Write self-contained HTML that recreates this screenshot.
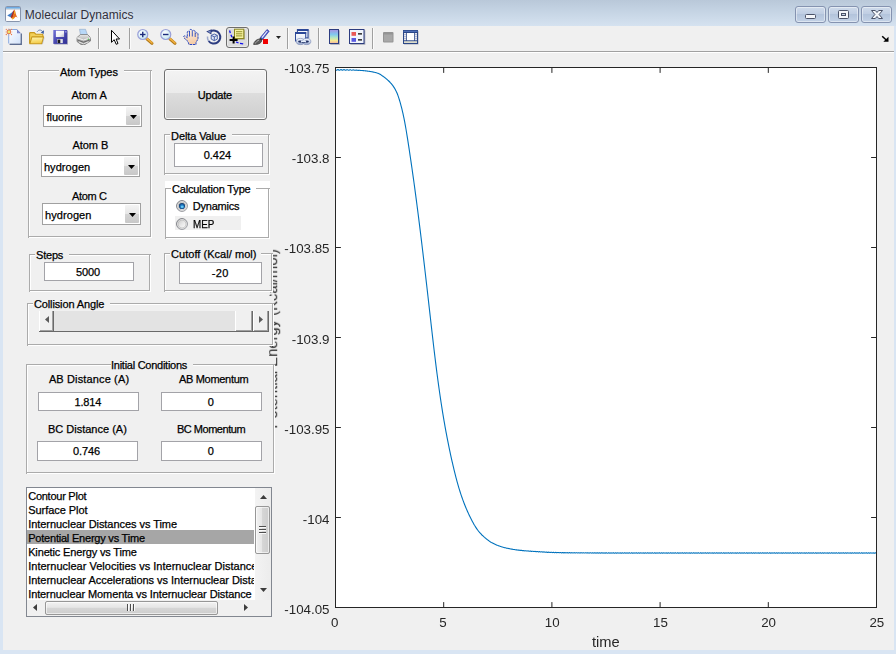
<!DOCTYPE html>
<html><head><meta charset="utf-8"><title>Molecular Dynamics</title>
<style>
*{box-sizing:content-box}
html,body{margin:0;padding:0;background:#d9e5f3;}
body{width:896px;height:654px;overflow:hidden;font-family:"Liberation Sans", Arial, sans-serif;}
#win{position:absolute;left:0;top:0;width:896px;height:654px;overflow:hidden;background:#d9e5f3;}
#titlebar{position:absolute;left:0;top:0;width:896px;height:26px;background:linear-gradient(#b9c8d9 0%,#c4d3e3 40%,#d5e2f0 100%);}
#client{position:absolute;left:3px;top:26px;width:891px;height:624px;background:#f0f0f0;}
#tbline{position:absolute;left:3px;top:51px;width:891px;height:1px;background:#a0a0a0;box-shadow:0 1px 0 #ffffff}
.t{position:absolute;white-space:nowrap;font-family:"Liberation Sans", Arial, sans-serif;-webkit-text-stroke:0.25px currentColor}
.capb{position:absolute;width:29px;height:15px;border:1px solid #8593b0;border-radius:3px;background:linear-gradient(#cfdbeb 0%,#c0cee3 45%,#b3c4dc 50%,#c3d2e6 100%);box-shadow:inset 0 0 0 1px rgba(255,255,255,0.45)}
.pn{position:absolute}
.ln{position:absolute;display:block}
.ed{position:absolute;border:1px solid #a3a3a8;background:#fff}
.cb{position:absolute;border:1px solid #a0a0a0;background:#fff}
.cbb{position:absolute;right:1px;top:1px;bottom:1px;width:14px;background:linear-gradient(#f4f4f4 0%,#e6e6e6 50%,#d4d4d4 51%,#c8c8c8 100%);border-radius:1px}
.cba{position:absolute;right:4px;top:9px}
#upd{position:absolute;left:164px;top:69px;width:101px;height:49px;border:1px solid #707070;border-radius:3px;background:linear-gradient(#f3f3f3 0%,#ebebeb 46%,#dddddd 47%,#cfcfcf 100%);box-shadow:inset 0 0 0 1px #fbfbfb}
#lb{position:absolute;left:26px;top:487px;width:244px;height:128px;border:1px solid #828790;background:#fff}
#lbv{position:absolute;left:27px;top:488px;width:227px;height:112px;overflow:hidden;font-size:11px;line-height:14px;white-space:nowrap;color:#000}
#lbclip{position:absolute;left:27px;top:488px;width:227px;height:112px;overflow:hidden;background:#fff}
.thv{position:absolute;border:1px solid #979797;border-radius:2px;background:linear-gradient(90deg,#f2f2f2 0%,#e6e6e6 45%,#d6d6d6 50%,#cdcdcd 100%);box-shadow:inset 0 0 0 1px rgba(255,255,255,0.6)}
.thh{position:absolute;border:1px solid #979797;border-radius:2px;background:linear-gradient(#f2f2f2 0%,#e6e6e6 45%,#d6d6d6 50%,#cdcdcd 100%);box-shadow:inset 0 0 0 1px rgba(255,255,255,0.6)}
.tk{font-family:"Liberation Sans", Arial, sans-serif;font-size:13.33px;fill:#262626}
.lb{font-family:"Liberation Sans", Arial, sans-serif;font-size:14.67px;fill:#262626}
</style></head>
<body>
<div id="win">
<div id="titlebar"></div>
<svg style="position:absolute;left:5px;top:6px" width="17" height="16" viewBox="0 0 17 16">
<defs><linearGradient id="gtb" x1="0" y1="0" x2="0" y2="1"><stop offset="0" stop-color="#5c9cdc"/><stop offset="1" stop-color="#a4d0f2"/></linearGradient></defs>
<rect x="0.500" y="0.500" width="15" height="15" rx="1.200" fill="#fdfdfd" stroke="#8795ad"/>
<rect x="1" y="1" width="14" height="1.900" fill="url(#gtb)"/>
<path d="M1 3.200 L15 3.200" stroke="#8795ad" stroke-width="0.500"/>
<path d="M2.200 9.400 L6.200 7 L8.200 5.200 L7.300 9.200 L5.600 11.200 Z" fill="#3d7cc8"/>
<path d="M5.600 11.200 L8 5.400 L9.300 3.600 L9 8 L7.400 13 Z" fill="#a82c20"/>
<path d="M9.300 3.600 C9.900 3.600 10.400 6 11 8.500 C11.600 10.500 12.400 11.600 12.900 11.800 L11.500 10.900 C10.500 10.100 9.800 11.500 9 12.400 C8 13.400 7.500 13.300 6.900 12.900 L8.600 8 Z" fill="#e8701c"/>
<path d="M9.300 4.200 L9.900 7.600 L9 7.800 Z" fill="#f8d424"/>
<path d="M6.900 12.900 L8.100 11 L8.800 12.500 C8 13.300 7.500 13.300 6.900 12.900 Z" fill="#f8bc20"/>
<path d="M10.600 7.200 C11.200 9.500 12 11.200 12.900 11.800 L11.600 10.600 Z" fill="#c83828"/>
</svg>
<div class="t" style="left:24.8px;top:7px;font-size:12px;line-height:16px;color:#30303c;letter-spacing:0.04px;-webkit-text-stroke:0;text-shadow:0 0 4px rgba(255,255,255,0.7)">Molecular Dynamics</div>
<div class="capb" style="left:795px;top:6px"></div>
<div class="capb" style="left:828px;top:6px"></div>
<div class="capb" style="left:861px;top:6px"></div>
<svg style="position:absolute;left:795px;top:6px" width="98" height="17" viewBox="0 0 98 17">
<rect x="10.500" y="8.500" width="10" height="4" rx="1" fill="#f4f6fa" stroke="#4a5268"/>
<rect x="43.500" y="4.500" width="10" height="8" rx="1" fill="#f4f6fa" stroke="#4a5268"/>
<rect x="46.500" y="7.500" width="4" height="2" fill="#c9d6e8" stroke="#4a5268"/>
<path d="M76.500 4.500 L80.300 4.500 L82 6.500 L83.700 4.500 L87.500 4.500 L84.100 8.500 L87.500 12.500 L83.700 12.500 L82 10.500 L80.300 12.500 L76.500 12.500 L79.900 8.500 Z" fill="#f4f6fa" stroke="#4a5268" stroke-linejoin="round"/>
</svg>
<div id="client"></div>
<div id="tbline"></div>

<svg style="position:absolute;left:6px;top:29px;overflow:visible" width="16" height="16" viewBox="0 0 16 16">
<defs><linearGradient id="gnew" x1="0" y1="0" x2="1" y2="1"><stop offset="0" stop-color="#ffffff"/><stop offset="1" stop-color="#d2e2fa"/></linearGradient></defs>
<path d="M3.600 15.100 L15.100 15.100 L15.100 4.600" fill="none" stroke="#5c6c90" stroke-width="1.700"/>
<path d="M2.700 0.500 L11 0.500 L14.500 4 L14.500 14.500 L2.700 14.500 Z" fill="url(#gnew)"/>
<path d="M2.700 14.500 L2.700 0.500 L11 0.500" fill="none" stroke="#88a8e0" stroke-width="1"/>
<path d="M11 0.300 L11 4.200 L14.900 4.200 Z" fill="#7078c0"/>
<path d="M11.600 2 L11.600 3.600 L13.200 3.600 Z" fill="#98a8e0"/>
<circle cx="2.900" cy="2.900" r="1.900" fill="#ece870" stroke="#e87848" stroke-width="1.100"/>
<g fill="#e87848"><circle cx="0.300" cy="0.300" r="0.650"/><circle cx="5.500" cy="0.300" r="0.650"/><circle cx="0.300" cy="5.500" r="0.650"/><circle cx="5.500" cy="5.500" r="0.650"/></g>
<g fill="#f0a888"><circle cx="2.900" cy="-0.400" r="0.450"/><circle cx="2.900" cy="6.200" r="0.450"/><circle cx="-0.400" cy="2.900" r="0.450"/><circle cx="6.200" cy="2.900" r="0.450"/></g>
</svg>
<svg style="position:absolute;left:29px;top:29px;overflow:visible" width="16" height="16" viewBox="0 0 16 16">
<defs><linearGradient id="gop" x1="0" y1="0" x2="0.200" y2="1"><stop offset="0" stop-color="#fff8b8"/><stop offset="1" stop-color="#f4cc48"/></linearGradient></defs>
<path d="M8.200 2.700 C9.500 0.600 12.200 0.500 13.700 2.600" fill="none" stroke="#6484b8" stroke-width="1"/>
<path d="M15 1.300 L14.700 5 L11.700 3.500 Z" fill="#3d5ea0"/>
<path d="M0.600 14.600 L0.600 4.400 Q0.600 3.600 1.400 3.600 L5.200 3.600 L6.800 5.200 L13.200 5.200 Q13.900 5.200 13.900 6 L13.900 8.500" fill="#f2d058" stroke="#c8981c" stroke-width="1.100"/>
<path d="M0.900 14.700 L2.900 7.900 L14.600 7.900 L12.800 14.700 Z" fill="url(#gop)" stroke="#c8981c" stroke-width="1.100" stroke-linejoin="round"/>
<path d="M13.400 15.300 L15.200 8.600" fill="none" stroke="#a0a8c0" stroke-width="0.700" opacity="0.700"/>
</svg>
<svg style="position:absolute;left:53px;top:29px;overflow:visible" width="16" height="16" viewBox="0 0 16 16">
<defs><linearGradient id="gsv" x1="0" y1="0" x2="1" y2="1"><stop offset="0" stop-color="#7474d8"/><stop offset="0.500" stop-color="#4848b0"/><stop offset="1" stop-color="#303094"/></linearGradient>
<linearGradient id="gsv2" x1="0" y1="0" x2="1" y2="1"><stop offset="0" stop-color="#ffffff"/><stop offset="0.600" stop-color="#f0f0f4"/><stop offset="1" stop-color="#b8b8c8"/></linearGradient></defs>
<rect x="1.200" y="1.900" width="13.800" height="13.800" fill="#8888a0" opacity="0.550"/>
<rect x="0.300" y="1" width="13.900" height="13.900" fill="url(#gsv)"/>
<rect x="2.900" y="1.700" width="8.200" height="6.300" fill="url(#gsv2)"/>
<rect x="4.200" y="10.100" width="5.600" height="4" fill="#e4e4ec"/>
<rect x="4.600" y="10.600" width="2.700" height="3.500" fill="#181820"/>
<rect x="12.400" y="2" width="1" height="1.600" fill="#b8b8f8"/>
</svg>
<svg style="position:absolute;left:76px;top:29px;overflow:visible" width="16" height="16" viewBox="0 0 16 16">
<defs><linearGradient id="gpr" x1="0" y1="0" x2="0" y2="1"><stop offset="0" stop-color="#e8e8e8"/><stop offset="1" stop-color="#8c8c8c"/></linearGradient></defs>
<path d="M3.500 0.300 L9.500 0.300 L11.500 6 L4.500 6 Z" fill="#b8d8f8" stroke="#90a8c8" stroke-width="0.600"/>
<path d="M1 8.500 L4.500 5.500 L11.500 5.500 L14.500 8.500 L14.500 12 L9 15.500 L5 15.500 L1 12.500 Z" fill="url(#gpr)" stroke="#707070" stroke-width="0.700"/>
<path d="M1 8.800 L7.500 11 L14.500 8.800" fill="none" stroke="#f4f4f4" stroke-width="1"/>
<path d="M1.500 11 L7.500 13.200 L14.200 10.800" fill="none" stroke="#606060" stroke-width="0.900"/>
<path d="M3 13 L7.500 14.800 L12.500 12.800" fill="none" stroke="#fafafa" stroke-width="0.800"/>
<rect x="11.800" y="9.600" width="1.200" height="1" fill="#30c030"/>
</svg>
<div style="position:absolute;left:98px;top:28px;width:1px;height:21px;background:#a0a0a0"></div>
<div style="position:absolute;left:99px;top:28px;width:1px;height:21px;background:#fbfbfb"></div>
<svg style="position:absolute;left:106px;top:29px;overflow:visible" width="16" height="16" viewBox="0 0 16 16">
<path d="M5.500 1.300 L5.500 13.300 L8.200 10.700 L10.200 15.300 L12 14.500 L10.100 10 L13.600 10 Z" fill="#ffffff" stroke="#000" stroke-width="1" stroke-linejoin="miter"/>
</svg>
<div style="position:absolute;left:129px;top:28px;width:1px;height:21px;background:#a0a0a0"></div>
<div style="position:absolute;left:130px;top:28px;width:1px;height:21px;background:#fbfbfb"></div>
<svg style="position:absolute;left:137px;top:29px;overflow:visible" width="16" height="16" viewBox="0 0 16 16">
<defs><radialGradient id="gz137" cx="0.4" cy="0.35" r="0.7"><stop offset="0" stop-color="#ffffff"/><stop offset="1" stop-color="#bfe4f0"/></radialGradient></defs>
<path d="M9.800 9.800 L15 14.300" stroke="#b07818" stroke-width="3" stroke-linecap="round"/>
<path d="M10 9.600 L15 13.900" stroke="#f0b040" stroke-width="1.600" stroke-linecap="round"/>
<circle cx="5.750" cy="5.500" r="5" fill="url(#gz137)" stroke="#9aa0d8" stroke-width="1.200"/>
<path d="M3 5.500 L8.500 5.500" stroke="#1c2c7c" stroke-width="1.400"/><path d="M5.750 2.800 L5.750 8.200" stroke="#1c2c7c" stroke-width="1.400"/>
</svg>
<svg style="position:absolute;left:160px;top:29px;overflow:visible" width="16" height="16" viewBox="0 0 16 16">
<defs><radialGradient id="gz160" cx="0.4" cy="0.35" r="0.7"><stop offset="0" stop-color="#ffffff"/><stop offset="1" stop-color="#bfe4f0"/></radialGradient></defs>
<path d="M9.800 9.800 L15 14.300" stroke="#b07818" stroke-width="3" stroke-linecap="round"/>
<path d="M10 9.600 L15 13.900" stroke="#f0b040" stroke-width="1.600" stroke-linecap="round"/>
<circle cx="5.750" cy="5.500" r="5" fill="url(#gz160)" stroke="#9aa0d8" stroke-width="1.200"/>
<path d="M3 5.500 L8.500 5.500" stroke="#1c2c7c" stroke-width="1.400"/>
</svg>
<svg style="position:absolute;left:183px;top:29px;overflow:visible" width="16" height="16" viewBox="0 0 16 16">
<defs><linearGradient id="ghd" x1="0" y1="0" x2="0.300" y2="1"><stop offset="0" stop-color="#fff6ec"/><stop offset="1" stop-color="#f4ccA8"/></linearGradient></defs>
<path d="M6 15.500 L5 12.500 L1 8.800 C0 7.500 1.200 6.200 2.500 7.200 L4.300 8.800 L4.300 3.200 C4.300 1.800 6.300 1.800 6.400 3.200 L6.500 1.600 C6.700 0 9 0 9.200 1.600 L9.400 2.300 C9.800 0.800 12 1 12.100 2.600 L12.300 4.600 C12.800 3.300 15 3.500 15 5 L15 10 L13 13.500 L13 15.500 Z" fill="url(#ghd)" stroke="#2848c0" stroke-width="1" stroke-dasharray="2.400 0.700" stroke-linejoin="round"/>
<path d="M6.500 3 L6.500 7.500 M9.300 2.400 L9.300 7.500 M12.200 4.400 L12.200 8" stroke="#2848c0" stroke-width="0.900" fill="none"/>
</svg>
<svg style="position:absolute;left:206px;top:29px;overflow:visible" width="16" height="16" viewBox="0 0 16 16">
<path d="M4.300 2.600 A6.500 6.500 0 1 1 2.600 12" fill="none" stroke="#2c3c80" stroke-width="2"/>
<path d="M2.600 12 A6.600 6.600 0 0 1 1.500 7.500" fill="none" stroke="#9ca8cc" stroke-width="1.500"/>
<path d="M0.200 2.600 L5.600 0.300 L5.400 5.400 Z" fill="#2c3c80"/>
<path d="M1.600 2.800 L4.600 1.600 L4.500 4 Z" fill="#8094c8"/>
<path d="M5.200 6.400 L8.300 5 L11.300 6.400 L11.300 10.100 L8.300 11.700 L5.200 10.100 Z" fill="#dfe6f6" stroke="#4058a0" stroke-width="0.900" stroke-linejoin="round"/>
<path d="M5.200 6.400 L8.300 7.800 L11.300 6.400 M8.300 7.800 L8.300 11.700" fill="none" stroke="#4058a0" stroke-width="0.900"/>
</svg>
<div style="position:absolute;left:226px;top:27px;width:21px;height:19px;border:1px solid #6e6e6e;border-radius:3px;background:#dcdcdc;box-shadow:inset 0 0 0 1px #e9e9e9"></div>
<svg style="position:absolute;left:229px;top:29px;overflow:visible" width="16" height="16" viewBox="0 0 16 16">
<path d="M0.600 1.500 L1.300 4.200 M1.900 5.800 L3 8.200 M7 13 L9.500 13.800 M11 14.300 L14.200 14.800" stroke="#1010f0" stroke-width="1.300" fill="none"/>
<rect x="6.500" y="1.400" width="9.200" height="9.200" fill="#80804c" opacity="0.650"/>
<rect x="5.500" y="0.200" width="9.300" height="9.300" fill="#f6f2a0" stroke="#8c8820" stroke-width="1"/>
<path d="M7 2.700 L13.300 2.700 M7 4.800 L13.300 4.800 M7 6.900 L13.300 6.900" stroke="#8c8820" stroke-width="0.900"/>
<path d="M0.600 11 L8.600 11 M4.600 7.500 L4.600 14.600" stroke="#000" stroke-width="2"/>
</svg>
<svg style="position:absolute;left:253px;top:29px;overflow:visible" width="16" height="16" viewBox="0 0 16 16">
<path d="M14 0.500 L16.200 2.200 L9.600 10.600 L7.200 8.700 Z" fill="#4656c8" stroke="#2830a0" stroke-width="0.600"/>
<path d="M14.300 2 L9 8.700" stroke="#eef0ff" stroke-width="1.200"/>
<path d="M7.200 8.700 L9.600 10.600 L8.600 11.900 L6.200 10 Z" fill="#303030"/>
<path d="M6.200 10 L8.600 11.900 C8.300 14 5.500 15.800 0.600 15.400 C0.800 13 3.500 10.200 6.200 10 Z" fill="#5c5c5c" stroke="#303030" stroke-width="0.700"/>
<path d="M2.200 14.600 C3 13 4.600 11.600 6 11.100" stroke="#b0b0b0" stroke-width="1" fill="none"/>
<rect x="10" y="10" width="5" height="5" fill="#f00000"/>
</svg>
<svg style="position:absolute;left:276px;top:36px" width="5" height="3" viewBox="0 0 5 3"><path d="M0 0 L5 0 L2.500 3 Z" fill="#222"/></svg>
<div style="position:absolute;left:287px;top:28px;width:1px;height:21px;background:#a0a0a0"></div>
<div style="position:absolute;left:288px;top:28px;width:1px;height:21px;background:#fbfbfb"></div>
<svg style="position:absolute;left:295px;top:29px;overflow:visible" width="16" height="16" viewBox="0 0 16 16">
<defs><linearGradient id="glk" x1="0" y1="0" x2="0" y2="1"><stop offset="0" stop-color="#ffffff"/><stop offset="1" stop-color="#dce4f4"/></linearGradient>
<linearGradient id="gch" x1="0" y1="0" x2="0" y2="1"><stop offset="0" stop-color="#f4f8ff"/><stop offset="0.600" stop-color="#c4d0e8"/><stop offset="1" stop-color="#8898c0"/></linearGradient></defs>
<rect x="13.300" y="1" width="1" height="8.500" fill="#7080a8" opacity="0.600"/>
<rect x="2.400" y="0.500" width="10.600" height="8.400" fill="url(#glk)" stroke="#2c4898" stroke-width="1"/>
<rect x="2" y="0" width="11.400" height="2" fill="#2c4898"/>
<rect x="0.500" y="3.500" width="10.200" height="8.500" fill="url(#glk)" stroke="#2c4898" stroke-width="1"/>
<rect x="0" y="3" width="11.200" height="2" fill="#2c4898"/>
<ellipse cx="5.400" cy="12.500" rx="4.200" ry="3.100" fill="url(#gch)" stroke="#7484b0" stroke-width="0.600"/>
<ellipse cx="11.600" cy="12.500" rx="4.200" ry="3.100" fill="url(#gch)" stroke="#7484b0" stroke-width="0.600"/>
<ellipse cx="5.200" cy="12.600" rx="2.100" ry="1.100" fill="#1c2c60"/>
<ellipse cx="11.800" cy="12.600" rx="2.100" ry="1.100" fill="#1c2c60"/>
<rect x="5.800" y="11.700" width="5.400" height="1.200" rx="0.600" fill="#e8f0fc"/>
<rect x="6.800" y="13" width="3.400" height="0.700" fill="#1c2c60"/>
</svg>
<div style="position:absolute;left:318px;top:28px;width:1px;height:21px;background:#a0a0a0"></div>
<div style="position:absolute;left:319px;top:28px;width:1px;height:21px;background:#fbfbfb"></div>
<svg style="position:absolute;left:328px;top:29px;overflow:visible" width="16" height="16" viewBox="0 0 16 16">
<defs><linearGradient id="gcb" x1="0" y1="0" x2="0" y2="1"><stop offset="0" stop-color="#a890e0"/><stop offset="0.350" stop-color="#80c8f0"/><stop offset="0.600" stop-color="#b8e8c0"/><stop offset="0.800" stop-color="#f8e890"/><stop offset="1" stop-color="#f0b0a0"/></linearGradient></defs>
<rect x="2.300" y="1.300" width="9.500" height="14.500" fill="#606880" opacity="0.500"/>
<rect x="1.500" y="0.500" width="9" height="14" fill="url(#gcb)" stroke="#2c3c80" stroke-width="1"/>
</svg>
<svg style="position:absolute;left:349px;top:29px;overflow:visible" width="16" height="16" viewBox="0 0 16 16">
<rect x="1.300" y="1.300" width="15" height="14.500" fill="#606880" opacity="0.500"/>
<rect x="0.500" y="0.500" width="14.500" height="14" fill="#f0f4fc" stroke="#2c3c80" stroke-width="1"/>
<rect x="2.500" y="3" width="4.500" height="3.800" fill="#e85858"/>
<rect x="2.500" y="9" width="4.500" height="3.800" fill="#5858e0"/>
<path d="M9 4.800 L13 4.800 M9 10.800 L13 10.800" stroke="#000" stroke-width="1.300"/>
</svg>
<div style="position:absolute;left:372px;top:28px;width:1px;height:21px;background:#a0a0a0"></div>
<div style="position:absolute;left:373px;top:28px;width:1px;height:21px;background:#fbfbfb"></div>
<svg style="position:absolute;left:383px;top:32px;overflow:visible" width="11" height="11" viewBox="0 0 11 11">
<rect x="0" y="0" width="10.500" height="10.500" rx="1" fill="#949494"/>
<rect x="1" y="2.500" width="8.500" height="7" fill="#a8a8a8"/>
</svg>
<svg style="position:absolute;left:403px;top:30px;overflow:visible" width="15" height="14" viewBox="0 0 15 14">
<rect x="1" y="1" width="14.500" height="13.500" fill="#606880" opacity="0.500"/>
<rect x="0" y="0" width="15" height="14" fill="#2b4788"/>
<rect x="0.500" y="0.800" width="14" height="1" fill="#5878c0"/>
<rect x="3.800" y="3" width="7.400" height="7.300" fill="#ffffff"/>
<rect x="1" y="3" width="2" height="7.300" fill="#e4e4ec"/>
<rect x="12" y="3" width="2" height="7.300" fill="#e4e4ec"/>
<rect x="1" y="11.200" width="13" height="1.800" fill="#dcdccc"/>
<path d="M1 4.500 h2 M1 6.500 h2 M1 8.500 h2 M12 4.500 h2 M12 6.500 h2 M12 8.500 h2" stroke="#8090b8" stroke-width="0.500"/>
</svg>
<svg style="position:absolute;left:881px;top:35px;overflow:visible" width="9" height="8" viewBox="0 0 9 8">
<path d="M1.200 1.200 L5.500 5.200" stroke="#000" stroke-width="1.500"/>
<path d="M7.500 1.800 L7.500 6.800 L2.300 6.800 Z" fill="#000"/>
</svg>
<svg id="axsvg" style="position:absolute;left:0;top:0" width="896" height="654" viewBox="0 0 896 654">
<rect x="335.5" y="67.5" width="541.0" height="540.0" fill="#fff"/>
<polyline points="335.5,69.90 336.0,70.28 336.5,70.30 337.0,69.95 337.5,69.57 338.0,69.51 338.5,69.82 339.0,70.20 339.5,70.29 340.0,70.03 340.5,69.67 341.0,69.55 341.5,69.77 342.0,70.12 342.5,70.27 343.0,70.09 343.5,69.77 344.0,69.61 344.5,69.76 345.0,70.06 345.5,70.24 346.0,70.14 346.5,69.87 347.0,69.70 347.5,69.77 348.0,70.02 348.5,70.21 349.0,70.17 349.5,69.96 350.0,69.79 350.5,69.81 351.0,70.01 351.5,70.18 352.0,70.20 352.5,70.06 353.0,69.91 353.5,69.91 354.0,70.05 354.5,70.21 355.0,70.26 355.5,70.19 356.0,70.09 356.5,70.07 357.0,70.18 357.5,70.31 358.0,70.37 358.5,70.35 359.0,70.29 359.5,70.29 360.0,70.36 360.5,70.45 361.0,70.51 361.5,70.52 362.0,70.52 362.5,70.54 363.0,70.60 363.5,70.65 364.0,70.70 364.5,70.75 365.0,70.80 365.5,70.86 366.0,70.92 366.5,70.98 367.0,71.05 367.5,71.12 368.0,71.19 368.5,71.26 369.0,71.33 369.5,71.41 370.0,71.49 370.5,71.57 371.0,71.65 371.5,71.73 372.0,71.82 372.5,71.91 373.0,72.01 373.5,72.11 374.0,72.21 374.5,72.33 375.0,72.44 375.5,72.57 376.0,72.70 376.5,72.84 377.0,72.99 377.5,73.15 378.0,73.32 378.5,73.50 379.0,73.71 379.5,73.96 380.0,74.24 380.5,74.56 381.0,74.89 381.5,75.24 382.0,75.59 382.5,75.94 383.0,76.29 383.5,76.65 384.0,77.01 384.5,77.39 385.0,77.77 385.5,78.16 386.0,78.56 386.5,78.98 387.0,79.40 387.5,79.84 388.0,80.29 388.5,80.76 389.0,81.24 389.5,81.74 390.0,82.25 390.5,82.79 391.0,83.35 391.5,83.94 392.0,84.55 392.5,85.19 393.0,85.87 393.5,86.58 394.0,87.33 394.5,88.11 395.0,88.96 395.5,89.88 396.0,90.88 396.5,91.94 397.0,93.07 397.5,94.28 398.0,95.62 398.5,97.09 399.0,98.66 399.5,100.27 400.0,101.95 400.5,103.72 401.0,105.56 401.5,107.47 402.0,109.47 402.5,111.56 403.0,113.74 403.5,116.03 404.0,118.43 404.5,120.95 405.0,123.59 405.5,126.35 406.0,129.23 406.5,132.22 407.0,135.31 407.5,138.46 408.0,141.68 408.5,144.92 409.0,148.19 409.5,151.50 410.0,154.84 410.5,158.22 411.0,161.62 411.5,165.07 412.0,168.54 412.5,172.05 413.0,175.60 413.5,179.18 414.0,182.79 414.5,186.44 415.0,190.13 415.5,193.85 416.0,197.60 416.5,201.39 417.0,205.22 417.5,209.08 418.0,212.97 418.5,216.90 419.0,220.86 419.5,224.85 420.0,228.87 420.5,232.93 421.0,237.02 421.5,241.13 422.0,245.28 422.5,249.45 423.0,253.65 423.5,257.88 424.0,262.12 424.5,266.40 425.0,270.69 425.5,275.00 426.0,279.33 426.5,283.68 427.0,288.04 427.5,292.41 428.0,296.79 428.5,301.18 429.0,305.58 429.5,309.98 430.0,314.39 430.5,318.80 431.0,323.20 431.5,327.60 432.0,331.98 432.5,336.33 433.0,340.66 433.5,344.95 434.0,349.19 434.5,353.38 435.0,357.52 435.5,361.60 436.0,365.62 436.5,369.56 437.0,373.45 437.5,377.26 438.0,381.00 438.5,384.67 439.0,388.27 439.5,391.79 440.0,395.25 440.5,398.64 441.0,401.96 441.5,405.22 442.0,408.41 442.5,411.54 443.0,414.60 443.5,417.61 444.0,420.55 444.5,423.44 445.0,426.28 445.5,429.06 446.0,431.78 446.5,434.46 447.0,437.09 447.5,439.67 448.0,442.21 448.5,444.70 449.0,447.15 449.5,449.56 450.0,451.93 450.5,454.26 451.0,456.55 451.5,458.80 452.0,461.02 452.5,463.21 453.0,465.36 453.5,467.48 454.0,469.57 454.5,471.62 455.0,473.64 455.5,475.62 456.0,477.56 456.5,479.46 457.0,481.31 457.5,483.12 458.0,484.88 458.5,486.61 459.0,488.29 459.5,489.93 460.0,491.52 460.5,493.08 461.0,494.60 461.5,496.09 462.0,497.53 462.5,498.94 463.0,500.32 463.5,501.67 464.0,502.99 464.5,504.27 465.0,505.53 465.5,506.76 466.0,507.97 466.5,509.15 467.0,510.30 467.5,511.43 468.0,512.54 468.5,513.63 469.0,514.70 469.5,515.75 470.0,516.78 470.5,517.79 471.0,518.78 471.5,519.75 472.0,520.71 472.5,521.66 473.0,522.59 473.5,523.51 474.0,524.40 474.5,525.26 475.0,526.07 475.5,526.85 476.0,527.62 476.5,528.37 477.0,529.10 477.5,529.80 478.0,530.48 478.5,531.13 479.0,531.74 479.5,532.33 480.0,532.90 480.5,533.45 481.0,533.98 481.5,534.50 482.0,535.01 482.5,535.50 483.0,535.97 483.5,536.44 484.0,536.89 484.5,537.33 485.0,537.75 485.5,538.17 486.0,538.58 486.5,538.99 487.0,539.40 487.5,539.80 488.0,540.18 488.5,540.56 489.0,540.93 489.5,541.29 490.0,541.63 490.5,541.96 491.0,542.28 491.5,542.57 492.0,542.84 492.5,543.10 493.0,543.35 493.5,543.59 494.0,543.83 494.5,544.06 495.0,544.29 495.5,544.51 496.0,544.73 496.5,544.94 497.0,545.14 497.5,545.35 498.0,545.54 498.5,545.73 499.0,545.92 499.5,546.10 500.0,546.27 500.5,546.44 501.0,546.60 501.5,546.77 502.0,546.92 502.5,547.06 503.0,547.19 503.5,547.35 504.0,547.49 504.5,547.61 505.0,547.70 505.5,547.83 506.0,547.98 506.5,548.10 507.0,548.17 507.5,548.26 508.0,548.40 508.5,548.54 509.0,548.62 509.5,548.67 510.0,548.77 510.5,548.93 511.0,549.04 511.5,549.08 512.0,549.12 512.5,549.25 513.0,549.40 513.5,549.47 514.0,549.48 514.5,549.54 515.0,549.69 515.5,549.81 516.0,549.83 516.5,549.82 517.0,549.91 517.5,550.08 518.0,550.15 518.5,550.11 519.0,550.12 519.5,550.26 520.0,550.40 520.5,550.40 521.0,550.34 521.5,550.39 522.0,550.56 522.5,550.65 523.0,550.59 523.5,550.55 524.0,550.67 524.5,550.84 525.0,550.85 525.5,550.75 526.0,550.76 526.5,550.93 527.0,551.06 527.5,550.99 528.0,550.89 528.5,550.98 529.0,551.18 529.5,551.23 530.0,551.10 530.5,551.05 531.0,551.22 531.5,551.39 532.0,551.34 532.5,551.20 533.0,551.24 533.5,551.46 534.0,551.56 534.5,551.42 535.0,551.32 535.5,551.46 536.0,551.68 536.5,551.67 537.0,551.49 537.5,551.48 538.0,551.71 538.5,551.87 539.0,551.75 539.5,551.59 540.0,551.69 540.5,551.95 541.0,552.00 541.5,551.81 542.0,551.74 542.5,551.94 543.0,552.15 543.5,552.07 544.0,551.88 544.5,551.93 545.0,552.18 545.5,552.29 546.0,552.12 546.5,551.99 547.0,552.15 547.5,552.39 548.0,552.37 548.5,552.16 549.0,552.14 549.5,552.37 550.0,552.53 550.5,552.39 551.0,552.22 551.5,552.32 552.0,552.56 552.5,552.59 553.0,552.39 553.5,552.30 554.0,552.49 554.5,552.68 555.0,552.59 555.5,552.39 556.0,552.42 556.5,552.66 557.0,552.74 557.5,552.56 558.0,552.42 558.5,552.56 559.0,552.78 559.5,552.75 560.0,552.53 560.5,552.50 561.0,552.72 561.5,552.86 562.0,552.71 562.5,552.53 563.0,552.61 563.5,552.85 564.0,552.87 564.5,552.66 565.0,552.57 565.5,552.75 566.0,552.93 566.5,552.83 567.0,552.62 567.5,552.64 568.0,552.88 568.5,552.96 569.0,552.77 569.5,552.62 570.0,552.75 570.5,552.96 571.0,552.92 571.5,552.70 572.0,552.65 572.5,552.87 573.0,553.00 573.5,552.85 574.0,552.66 574.5,552.74 575.0,552.97 575.5,552.99 576.0,552.77 576.5,552.67 577.0,552.85 577.5,553.03 578.0,552.93 578.5,552.71 579.0,552.73 579.5,552.96 580.0,553.04 580.5,552.85 581.0,552.70 581.5,552.83 582.0,553.04 582.5,553.00 583.0,552.77 583.5,552.73 584.0,552.94 584.5,553.07 585.0,552.92 585.5,552.73 586.0,552.81 586.5,553.04 587.0,553.06 587.5,552.84 588.0,552.74 588.5,552.92 589.0,553.10 589.5,552.99 590.0,552.78 590.5,552.79 591.0,553.02 591.5,553.10 592.0,552.91 592.5,552.76 593.0,552.89 593.5,553.10 594.0,553.06 594.5,552.83 595.0,552.79 595.5,553.00 596.0,553.13 596.5,552.98 597.0,552.78 597.5,552.86 598.0,553.09 598.5,553.11 599.0,552.89 599.5,552.79 600.0,552.97 600.5,553.14 601.0,553.04 601.5,552.82 602.0,552.84 602.5,553.07 603.0,553.14 603.5,552.95 604.0,552.80 604.5,552.93 605.0,553.14 605.5,553.10 606.0,552.87 606.5,552.82 607.0,553.03 607.5,553.17 608.0,553.01 608.5,552.82 609.0,552.90 609.5,553.12 610.0,553.14 610.5,552.92 611.0,552.82 611.5,552.99 612.0,553.17 612.5,553.07 613.0,552.85 613.5,552.86 614.0,553.09 614.5,553.17 615.0,552.97 615.5,552.82 616.0,552.95 616.5,553.16 617.0,553.11 617.5,552.89 618.0,552.84 618.5,553.05 619.0,553.18 619.5,553.02 620.0,552.83 620.5,552.91 621.0,553.13 621.5,553.15 622.0,552.93 622.5,552.82 623.0,553.00 623.5,553.18 624.0,553.07 624.5,552.85 625.0,552.87 625.5,553.09 626.0,553.17 626.5,552.98 627.0,552.82 627.5,552.95 628.0,553.16 628.5,553.11 629.0,552.89 629.5,552.84 630.0,553.05 630.5,553.18 631.0,553.02 631.5,552.83 632.0,552.91 632.5,553.13 633.0,553.15 633.5,552.93 634.0,552.82 634.5,553.00 635.0,553.18 635.5,553.07 636.0,552.85 636.5,552.87 637.0,553.09 637.5,553.17 638.0,552.98 638.5,552.82 639.0,552.95 639.5,553.16 640.0,553.11 640.5,552.89 641.0,552.84 641.5,553.05 642.0,553.18 642.5,553.02 643.0,552.83 643.5,552.91 644.0,553.13 644.5,553.15 645.0,552.93 645.5,552.82 646.0,553.00 646.5,553.18 647.0,553.07 647.5,552.85 648.0,552.87 648.5,553.09 649.0,553.17 649.5,552.98 650.0,552.82 650.5,552.95 651.0,553.16 651.5,553.11 652.0,552.89 652.5,552.84 653.0,553.05 653.5,553.18 654.0,553.02 654.5,552.83 655.0,552.91 655.5,553.13 656.0,553.15 656.5,552.93 657.0,552.82 657.5,553.00 658.0,553.18 658.5,553.07 659.0,552.85 659.5,552.87 660.0,553.09 660.5,553.17 661.0,552.98 661.5,552.82 662.0,552.95 662.5,553.16 663.0,553.11 663.5,552.89 664.0,552.84 664.5,553.05 665.0,553.18 665.5,553.02 666.0,552.83 666.5,552.91 667.0,553.13 667.5,553.15 668.0,552.93 668.5,552.82 669.0,553.00 669.5,553.18 670.0,553.07 670.5,552.85 671.0,552.87 671.5,553.09 672.0,553.17 672.5,552.98 673.0,552.82 673.5,552.95 674.0,553.16 674.5,553.11 675.0,552.89 675.5,552.84 676.0,553.05 676.5,553.18 677.0,553.02 677.5,552.83 678.0,552.91 678.5,553.13 679.0,553.15 679.5,552.93 680.0,552.82 680.5,553.00 681.0,553.18 681.5,553.07 682.0,552.85 682.5,552.87 683.0,553.09 683.5,553.17 684.0,552.98 684.5,552.82 685.0,552.95 685.5,553.16 686.0,553.11 686.5,552.89 687.0,552.84 687.5,553.05 688.0,553.18 688.5,553.02 689.0,552.83 689.5,552.91 690.0,553.13 690.5,553.15 691.0,552.93 691.5,552.82 692.0,553.00 692.5,553.18 693.0,553.07 693.5,552.85 694.0,552.87 694.5,553.09 695.0,553.17 695.5,552.98 696.0,552.82 696.5,552.95 697.0,553.16 697.5,553.11 698.0,552.89 698.5,552.84 699.0,553.05 699.5,553.18 700.0,553.02 700.5,552.83 701.0,552.91 701.5,553.13 702.0,553.15 702.5,552.93 703.0,552.82 703.5,553.00 704.0,553.18 704.5,553.07 705.0,552.85 705.5,552.87 706.0,553.09 706.5,553.17 707.0,552.98 707.5,552.82 708.0,552.95 708.5,553.16 709.0,553.11 709.5,552.89 710.0,552.84 710.5,553.05 711.0,553.18 711.5,553.02 712.0,552.83 712.5,552.91 713.0,553.13 713.5,553.15 714.0,552.93 714.5,552.82 715.0,553.00 715.5,553.18 716.0,553.07 716.5,552.85 717.0,552.87 717.5,553.09 718.0,553.17 718.5,552.98 719.0,552.82 719.5,552.95 720.0,553.16 720.5,553.11 721.0,552.89 721.5,552.84 722.0,553.05 722.5,553.18 723.0,553.02 723.5,552.83 724.0,552.91 724.5,553.13 725.0,553.15 725.5,552.93 726.0,552.82 726.5,553.00 727.0,553.18 727.5,553.07 728.0,552.85 728.5,552.87 729.0,553.09 729.5,553.17 730.0,552.98 730.5,552.82 731.0,552.95 731.5,553.16 732.0,553.11 732.5,552.89 733.0,552.84 733.5,553.05 734.0,553.18 734.5,553.02 735.0,552.83 735.5,552.91 736.0,553.13 736.5,553.15 737.0,552.93 737.5,552.82 738.0,553.00 738.5,553.18 739.0,553.07 739.5,552.85 740.0,552.87 740.5,553.09 741.0,553.17 741.5,552.98 742.0,552.82 742.5,552.95 743.0,553.16 743.5,553.11 744.0,552.89 744.5,552.84 745.0,553.05 745.5,553.18 746.0,553.02 746.5,552.83 747.0,552.91 747.5,553.13 748.0,553.15 748.5,552.93 749.0,552.82 749.5,553.00 750.0,553.18 750.5,553.07 751.0,552.85 751.5,552.87 752.0,553.09 752.5,553.17 753.0,552.98 753.5,552.82 754.0,552.95 754.5,553.16 755.0,553.11 755.5,552.89 756.0,552.84 756.5,553.05 757.0,553.18 757.5,553.02 758.0,552.83 758.5,552.91 759.0,553.13 759.5,553.15 760.0,552.93 760.5,552.82 761.0,553.00 761.5,553.18 762.0,553.07 762.5,552.85 763.0,552.87 763.5,553.09 764.0,553.17 764.5,552.98 765.0,552.82 765.5,552.95 766.0,553.16 766.5,553.11 767.0,552.89 767.5,552.84 768.0,553.05 768.5,553.18 769.0,553.02 769.5,552.83 770.0,552.91 770.5,553.13 771.0,553.15 771.5,552.93 772.0,552.82 772.5,553.00 773.0,553.18 773.5,553.07 774.0,552.85 774.5,552.87 775.0,553.09 775.5,553.17 776.0,552.98 776.5,552.82 777.0,552.95 777.5,553.16 778.0,553.11 778.5,552.89 779.0,552.84 779.5,553.05 780.0,553.18 780.5,553.02 781.0,552.83 781.5,552.91 782.0,553.13 782.5,553.15 783.0,552.93 783.5,552.82 784.0,553.00 784.5,553.18 785.0,553.07 785.5,552.85 786.0,552.87 786.5,553.09 787.0,553.17 787.5,552.98 788.0,552.82 788.5,552.95 789.0,553.16 789.5,553.11 790.0,552.89 790.5,552.84 791.0,553.05 791.5,553.18 792.0,553.02 792.5,552.83 793.0,552.91 793.5,553.13 794.0,553.15 794.5,552.93 795.0,552.82 795.5,553.00 796.0,553.18 796.5,553.07 797.0,552.85 797.5,552.87 798.0,553.09 798.5,553.17 799.0,552.98 799.5,552.82 800.0,552.95 800.5,553.16 801.0,553.11 801.5,552.89 802.0,552.84 802.5,553.05 803.0,553.18 803.5,553.02 804.0,552.83 804.5,552.91 805.0,553.13 805.5,553.15 806.0,552.93 806.5,552.82 807.0,553.00 807.5,553.18 808.0,553.07 808.5,552.85 809.0,552.87 809.5,553.09 810.0,553.17 810.5,552.98 811.0,552.82 811.5,552.95 812.0,553.16 812.5,553.11 813.0,552.89 813.5,552.84 814.0,553.05 814.5,553.18 815.0,553.02 815.5,552.83 816.0,552.91 816.5,553.13 817.0,553.15 817.5,552.93 818.0,552.82 818.5,553.00 819.0,553.18 819.5,553.07 820.0,552.85 820.5,552.87 821.0,553.09 821.5,553.17 822.0,552.98 822.5,552.82 823.0,552.95 823.5,553.16 824.0,553.11 824.5,552.89 825.0,552.84 825.5,553.05 826.0,553.18 826.5,553.02 827.0,552.83 827.5,552.91 828.0,553.13 828.5,553.15 829.0,552.93 829.5,552.82 830.0,553.00 830.5,553.18 831.0,553.07 831.5,552.85 832.0,552.87 832.5,553.09 833.0,553.17 833.5,552.98 834.0,552.82 834.5,552.95 835.0,553.16 835.5,553.11 836.0,552.89 836.5,552.84 837.0,553.05 837.5,553.18 838.0,553.02 838.5,552.83 839.0,552.91 839.5,553.13 840.0,553.15 840.5,552.93 841.0,552.82 841.5,553.00 842.0,553.18 842.5,553.07 843.0,552.85 843.5,552.87 844.0,553.09 844.5,553.17 845.0,552.98 845.5,552.82 846.0,552.95 846.5,553.16 847.0,553.11 847.5,552.89 848.0,552.84 848.5,553.05 849.0,553.18 849.5,553.02 850.0,552.83 850.5,552.91 851.0,553.13 851.5,553.15 852.0,552.93 852.5,552.82 853.0,553.00 853.5,553.18 854.0,553.07 854.5,552.85 855.0,552.87 855.5,553.09 856.0,553.17 856.5,552.98 857.0,552.82 857.5,552.95 858.0,553.16 858.5,553.11 859.0,552.89 859.5,552.84 860.0,553.05 860.5,553.18 861.0,553.02 861.5,552.83 862.0,552.91 862.5,553.13 863.0,553.15 863.5,552.93 864.0,552.82 864.5,553.00 865.0,553.18 865.5,553.07 866.0,552.85 866.5,552.87 867.0,553.09 867.5,553.17 868.0,552.98 868.5,552.82 869.0,552.95 869.5,553.16 870.0,553.11 870.5,552.89 871.0,552.84 871.5,553.05 872.0,553.18 872.5,553.02 873.0,552.83 873.5,552.91 874.0,553.13 874.5,553.15 875.0,552.93 875.5,552.82 876.0,553.00 876.5,553.18" fill="none" stroke="#0072bd" stroke-width="1.1" stroke-linejoin="round"/>
<rect x="335.5" y="67.5" width="541.0" height="540.0" fill="none" stroke="#262626" stroke-width="1"/>
<path d="M335.50 607.5 v-5.4 M335.50 67.5 v5.4 M443.70 607.5 v-5.4 M443.70 67.5 v5.4 M551.90 607.5 v-5.4 M551.90 67.5 v5.4 M660.10 607.5 v-5.4 M660.10 67.5 v5.4 M768.30 607.5 v-5.4 M768.30 67.5 v5.4 M876.50 607.5 v-5.4 M876.50 67.5 v5.4 M335.5 67.50 h5.4 M876.5 67.50 h-5.4 M335.5 157.50 h5.4 M876.5 157.50 h-5.4 M335.5 247.50 h5.4 M876.5 247.50 h-5.4 M335.5 337.50 h5.4 M876.5 337.50 h-5.4 M335.5 427.50 h5.4 M876.5 427.50 h-5.4 M335.5 517.50 h5.4 M876.5 517.50 h-5.4 M335.5 607.50 h5.4 M876.5 607.50 h-5.4" stroke="#262626" stroke-width="1" fill="none"/>
<defs><filter id="fg" x="-5%" y="-50%" width="110%" height="200%" color-interpolation-filters="sRGB"><feColorMatrix type="saturate" values="0"/></filter></defs><text transform="translate(277.2,338.8) rotate(-90)" text-anchor="middle" class="lb" style="font-size:14.8px" filter="url(#fg)">Potential Energy (Kcal/mol)</text>
</svg>
<svg id="axlab" style="position:absolute;left:281px;top:56px;will-change:transform" width="613" height="594" viewBox="281 56 613 594">
<text x="329.5" y="72.90" text-anchor="end" class="tk">-103.75</text>
<text x="329.5" y="162.80" text-anchor="end" class="tk">-103.8</text>
<text x="329.5" y="252.80" text-anchor="end" class="tk">-103.85</text>
<text x="329.5" y="343.70" text-anchor="end" class="tk">-103.9</text>
<text x="329.5" y="433.70" text-anchor="end" class="tk">-103.95</text>
<text x="329.5" y="523.60" text-anchor="end" class="tk">-104</text>
<text x="329.5" y="613.70" text-anchor="end" class="tk">-104.05</text>
<text x="334.70" y="626.6" text-anchor="middle" class="tk">0</text>
<text x="442.90" y="626.6" text-anchor="middle" class="tk">5</text>
<text x="552.20" y="626.6" text-anchor="middle" class="tk">10</text>
<text x="660.40" y="626.6" text-anchor="middle" class="tk">15</text>
<text x="768.60" y="626.6" text-anchor="middle" class="tk">20</text>
<text x="876.80" y="626.6" text-anchor="middle" class="tk">25</text>
<text x="605.8" y="647.2" text-anchor="middle" class="lb">time</text>
</svg>
<div class="pn" style="left:28px;top:63px;width:124px;height:175px;background:#f0f0f0"></div>
<i class="ln" style="left:29px;top:71px;width:121px;height:1px;background:#ffffff"></i>
<i class="ln" style="left:29px;top:71px;width:1px;height:165px;background:#ffffff"></i>
<i class="ln" style="left:29px;top:237px;width:123px;height:1px;background:#ffffff"></i>
<i class="ln" style="left:151px;top:71px;width:1px;height:167px;background:#ffffff"></i>
<i class="ln" style="left:28px;top:70px;width:124px;height:1px;background:#ababab"></i>
<i class="ln" style="left:28px;top:70px;width:1px;height:168px;background:#ababab"></i>
<i class="ln" style="left:29px;top:236px;width:122px;height:1px;background:#ababab"></i>
<i class="ln" style="left:150px;top:71px;width:1px;height:166px;background:#ababab"></i>
<div style="position:absolute;left:59px;top:70px;width:65px;height:2px;background:#f0f0f0"></div>
<div class="t" style="left:59.90px;top:64.99px;font-size:11px;line-height:14px;color:#000;letter-spacing:0.025px;">Atom Types</div>
<div class="t" style="left:71.50px;top:87.79px;font-size:11px;line-height:14px;color:#000;letter-spacing:-0.046px;">Atom A</div>
<div class="cb" style="left:43px;top:105px;width:97px;height:20px"><div class="cbb"></div><svg class="cba" width="7" height="4" viewBox="0 0 7 4"><path d="M0 0 L7 0 L3.500 4 Z" fill="#000"/></svg></div>
<div class="t" style="left:46.60px;top:109.99px;font-size:11px;line-height:14px;color:#000;letter-spacing:-0.051px;">fluorine</div>
<div class="t" style="left:72.60px;top:137.89px;font-size:11px;line-height:14px;color:#000;letter-spacing:-0.086px;">Atom B</div>
<div class="cb" style="left:41px;top:155px;width:97px;height:20px"><div class="cbb"></div><svg class="cba" width="7" height="4" viewBox="0 0 7 4"><path d="M0 0 L7 0 L3.500 4 Z" fill="#000"/></svg></div>
<div class="t" style="left:43.90px;top:159.59px;font-size:11px;line-height:14px;color:#000;letter-spacing:0.064px;">hydrogen</div>
<div class="t" style="left:71.90px;top:188.89px;font-size:11px;line-height:14px;color:#000;letter-spacing:-0.306px;">Atom C</div>
<div class="cb" style="left:42px;top:203px;width:97px;height:20px"><div class="cbb"></div><svg class="cba" width="7" height="4" viewBox="0 0 7 4"><path d="M0 0 L7 0 L3.500 4 Z" fill="#000"/></svg></div>
<div class="t" style="left:45.10px;top:207.59px;font-size:11px;line-height:14px;color:#000;letter-spacing:0.064px;">hydrogen</div>
<div id="upd"></div>
<div class="t" style="left:197.80px;top:87.79px;font-size:11px;line-height:14px;color:#000;letter-spacing:-0.211px;">Update</div>
<div class="pn" style="left:164px;top:127px;width:106px;height:48px;background:#f0f0f0"></div>
<i class="ln" style="left:165px;top:135px;width:103px;height:1px;background:#ffffff"></i>
<i class="ln" style="left:165px;top:135px;width:1px;height:38px;background:#ffffff"></i>
<i class="ln" style="left:165px;top:174px;width:105px;height:1px;background:#ffffff"></i>
<i class="ln" style="left:269px;top:135px;width:1px;height:40px;background:#ffffff"></i>
<i class="ln" style="left:164px;top:134px;width:106px;height:1px;background:#ababab"></i>
<i class="ln" style="left:164px;top:134px;width:1px;height:41px;background:#ababab"></i>
<i class="ln" style="left:165px;top:173px;width:104px;height:1px;background:#ababab"></i>
<i class="ln" style="left:268px;top:135px;width:1px;height:39px;background:#ababab"></i>
<div style="position:absolute;left:170px;top:134px;width:62px;height:2px;background:#f0f0f0"></div>
<div class="t" style="left:171.10px;top:129.19px;font-size:11px;line-height:14px;color:#000;letter-spacing:-0.114px;">Delta Value</div>
<div class="ed" style="left:174px;top:143px;width:87px;height:22px"></div>
<div class="t" style="left:203.80px;top:148.19px;font-size:11px;line-height:14px;color:#000;letter-spacing:-0.052px;">0.424</div>
<div class="pn" style="left:165px;top:181px;width:105px;height:58px;background:#ffffff"></div>
<i class="ln" style="left:166px;top:189px;width:102px;height:1px;background:#ffffff"></i>
<i class="ln" style="left:166px;top:189px;width:1px;height:48px;background:#ffffff"></i>
<i class="ln" style="left:166px;top:238px;width:104px;height:1px;background:#ffffff"></i>
<i class="ln" style="left:269px;top:189px;width:1px;height:50px;background:#ffffff"></i>
<i class="ln" style="left:165px;top:188px;width:105px;height:1px;background:#ababab"></i>
<i class="ln" style="left:165px;top:188px;width:1px;height:51px;background:#ababab"></i>
<i class="ln" style="left:166px;top:237px;width:103px;height:1px;background:#ababab"></i>
<i class="ln" style="left:268px;top:189px;width:1px;height:49px;background:#ababab"></i>
<div style="position:absolute;left:171px;top:188px;width:85px;height:2px;background:#ffffff"></div>
<div class="t" style="left:172.00px;top:182.19px;font-size:11px;line-height:14px;color:#000;letter-spacing:-0.160px;">Calculation Type</div>
<div style="position:absolute;left:175px;top:216px;width:66px;height:14px;background:#f0f0f0"></div>
<svg style="position:absolute;left:176px;top:200px" width="12" height="12" viewBox="0 0 12 12">
<defs><linearGradient id="grb" x1="0" y1="0" x2="1" y2="1"><stop offset="0" stop-color="#c8c8c8"/><stop offset="0.500" stop-color="#e8e8e8"/><stop offset="1" stop-color="#fcfcfc"/></linearGradient>
<linearGradient id="gro" x1="0" y1="0" x2="1" y2="1"><stop offset="0" stop-color="#6a6c72"/><stop offset="1" stop-color="#a0a2a8"/></linearGradient>
<radialGradient id="grd" cx="0.5" cy="0.55" r="0.55"><stop offset="0" stop-color="#38acec"/><stop offset="0.550" stop-color="#1c6cb4"/><stop offset="1" stop-color="#0c2850"/></radialGradient></defs>
<circle cx="6" cy="6" r="5.400" fill="#f2f2f2" stroke="url(#gro)" stroke-width="1"/>
<circle cx="6" cy="6" r="4" fill="url(#grb)" stroke="#b4b4b4" stroke-width="0.600"/><circle cx="6" cy="6" r="3.100" fill="url(#grd)"/><ellipse cx="6.200" cy="6.900" rx="1.500" ry="1.100" fill="#6fd0f8" opacity="0.850"/></svg>
<svg style="position:absolute;left:176px;top:218px" width="12" height="12" viewBox="0 0 12 12">
<defs><linearGradient id="grb" x1="0" y1="0" x2="1" y2="1"><stop offset="0" stop-color="#c8c8c8"/><stop offset="0.500" stop-color="#e8e8e8"/><stop offset="1" stop-color="#fcfcfc"/></linearGradient>
<linearGradient id="gro" x1="0" y1="0" x2="1" y2="1"><stop offset="0" stop-color="#6a6c72"/><stop offset="1" stop-color="#a0a2a8"/></linearGradient>
<radialGradient id="grd" cx="0.5" cy="0.55" r="0.55"><stop offset="0" stop-color="#38acec"/><stop offset="0.550" stop-color="#1c6cb4"/><stop offset="1" stop-color="#0c2850"/></radialGradient></defs>
<circle cx="6" cy="6" r="5.400" fill="#f2f2f2" stroke="url(#gro)" stroke-width="1"/>
<circle cx="6" cy="6" r="4" fill="url(#grb)" stroke="#b4b4b4" stroke-width="0.600"/></svg>
<div class="t" style="left:192.80px;top:198.99px;font-size:11px;line-height:14px;color:#000;letter-spacing:-0.227px;">Dynamics</div>
<div class="t" style="left:192.80px;top:216.99px;font-size:11px;line-height:14px;color:#000;transform:scaleX(0.8936);transform-origin:0.00px 0;">MEP</div>
<div class="pn" style="left:29px;top:247px;width:122px;height:45px;background:#f0f0f0"></div>
<i class="ln" style="left:30px;top:255px;width:119px;height:1px;background:#ffffff"></i>
<i class="ln" style="left:30px;top:255px;width:1px;height:35px;background:#ffffff"></i>
<i class="ln" style="left:30px;top:291px;width:121px;height:1px;background:#ffffff"></i>
<i class="ln" style="left:150px;top:255px;width:1px;height:37px;background:#ffffff"></i>
<i class="ln" style="left:29px;top:254px;width:122px;height:1px;background:#ababab"></i>
<i class="ln" style="left:29px;top:254px;width:1px;height:38px;background:#ababab"></i>
<i class="ln" style="left:30px;top:290px;width:120px;height:1px;background:#ababab"></i>
<i class="ln" style="left:149px;top:255px;width:1px;height:36px;background:#ababab"></i>
<div style="position:absolute;left:35px;top:254px;width:34px;height:2px;background:#f0f0f0"></div>
<div class="t" style="left:36.00px;top:247.99px;font-size:11px;line-height:14px;color:#000;letter-spacing:-0.207px;">Steps</div>
<div class="ed" style="left:44px;top:262px;width:88px;height:17px"></div>
<div class="t" style="left:75.90px;top:264.69px;font-size:11px;line-height:14px;color:#000;letter-spacing:-0.051px;">5000</div>
<div class="pn" style="left:164px;top:246px;width:109px;height:46px;background:#f0f0f0"></div>
<i class="ln" style="left:165px;top:254px;width:106px;height:1px;background:#ffffff"></i>
<i class="ln" style="left:165px;top:254px;width:1px;height:36px;background:#ffffff"></i>
<i class="ln" style="left:165px;top:291px;width:108px;height:1px;background:#ffffff"></i>
<i class="ln" style="left:272px;top:254px;width:1px;height:38px;background:#ffffff"></i>
<i class="ln" style="left:164px;top:253px;width:109px;height:1px;background:#ababab"></i>
<i class="ln" style="left:164px;top:253px;width:1px;height:39px;background:#ababab"></i>
<i class="ln" style="left:165px;top:290px;width:107px;height:1px;background:#ababab"></i>
<i class="ln" style="left:271px;top:254px;width:1px;height:37px;background:#ababab"></i>
<div style="position:absolute;left:170px;top:253px;width:91px;height:2px;background:#f0f0f0"></div>
<div class="t" style="left:171.00px;top:246.69px;font-size:11px;line-height:14px;color:#000;letter-spacing:0.041px;">Cutoff (Kcal/ mol)</div>
<div class="ed" style="left:179px;top:262px;width:81px;height:20px"></div>
<div class="t" style="left:211.65px;top:265.89px;font-size:11px;line-height:14px;color:#000;letter-spacing:0.360px;">-20</div>
<div class="pn" style="left:27px;top:296px;width:247px;height:50px;background:#f0f0f0"></div>
<i class="ln" style="left:28px;top:304px;width:244px;height:1px;background:#ffffff"></i>
<i class="ln" style="left:28px;top:304px;width:1px;height:40px;background:#ffffff"></i>
<i class="ln" style="left:28px;top:345px;width:246px;height:1px;background:#ffffff"></i>
<i class="ln" style="left:273px;top:304px;width:1px;height:42px;background:#ffffff"></i>
<i class="ln" style="left:27px;top:303px;width:247px;height:1px;background:#ababab"></i>
<i class="ln" style="left:27px;top:303px;width:1px;height:43px;background:#ababab"></i>
<i class="ln" style="left:28px;top:344px;width:245px;height:1px;background:#ababab"></i>
<i class="ln" style="left:272px;top:304px;width:1px;height:41px;background:#ababab"></i>
<div style="position:absolute;left:33px;top:303px;width:77px;height:2px;background:#f0f0f0"></div>
<div class="t" style="left:34.00px;top:296.69px;font-size:11px;line-height:14px;color:#000;letter-spacing:-0.132px;">Collision Angle</div>
<div style="position:absolute;left:39px;top:311px;width:230px;height:20px;background:#e3e3e3"></div>
<div style="position:absolute;left:39px;top:331px;width:230px;height:1px;background:#696969"></div>
<div style="position:absolute;left:39px;top:311px;width:15px;height:21px;background:#f0f0f0;box-shadow:inset -1px -1px 0 #696969,inset 1px 0 0 #fff,inset -2px -2px 0 #a0a0a0"></div>
<div style="position:absolute;left:235px;top:311px;width:18px;height:21px;background:#f0f0f0;box-shadow:inset -1px -1px 0 #696969,inset 1px 0 0 #fff,inset -2px -2px 0 #a0a0a0"></div>
<div style="position:absolute;left:253px;top:311px;width:16px;height:21px;background:#f0f0f0;box-shadow:inset -1px -1px 0 #696969,inset 1px 0 0 #fff,inset -2px -2px 0 #a0a0a0"></div>
<svg style="position:absolute;left:45px;top:316px" width="4" height="7" viewBox="0 0 4 7"><path d="M4 0 L4 7 L0 3.500 Z" fill="#5a5a5a"/></svg>
<svg style="position:absolute;left:259px;top:316px" width="4" height="7" viewBox="0 0 4 7"><path d="M0 0 L0 7 L4 3.500 Z" fill="#5a5a5a"/></svg>
<div class="pn" style="left:26px;top:357px;width:249px;height:117px;background:#f0f0f0"></div>
<i class="ln" style="left:27px;top:365px;width:246px;height:1px;background:#ffffff"></i>
<i class="ln" style="left:27px;top:365px;width:1px;height:107px;background:#ffffff"></i>
<i class="ln" style="left:27px;top:473px;width:248px;height:1px;background:#ffffff"></i>
<i class="ln" style="left:274px;top:365px;width:1px;height:109px;background:#ffffff"></i>
<i class="ln" style="left:26px;top:364px;width:249px;height:1px;background:#ababab"></i>
<i class="ln" style="left:26px;top:364px;width:1px;height:110px;background:#ababab"></i>
<i class="ln" style="left:27px;top:472px;width:247px;height:1px;background:#ababab"></i>
<i class="ln" style="left:273px;top:365px;width:1px;height:108px;background:#ababab"></i>
<div style="position:absolute;left:111px;top:364px;width:82px;height:2px;background:#f0f0f0"></div>
<div class="t" style="left:111.00px;top:358.19px;font-size:11px;line-height:14px;color:#000;letter-spacing:-0.259px;">Initial Conditions</div>
<div class="t" style="left:48.90px;top:371.89px;font-size:11px;line-height:14px;color:#000;letter-spacing:0.137px;">AB Distance (A)</div>
<div class="t" style="left:178.90px;top:371.89px;font-size:11px;line-height:14px;color:#000;letter-spacing:-0.298px;">AB Momentum</div>
<div class="ed" style="left:38px;top:392px;width:99px;height:17px"></div>
<div class="t" style="left:74.50px;top:394.89px;font-size:11px;line-height:14px;color:#000;letter-spacing:-0.152px;">1.814</div>
<div class="ed" style="left:161px;top:392px;width:99px;height:17px"></div>
<div class="t" style="left:207.80px;top:394.89px;font-size:11px;line-height:14px;color:#000;">0</div>
<div class="t" style="left:47.90px;top:421.99px;font-size:11px;line-height:14px;color:#000;letter-spacing:0.008px;">BC Distance (A)</div>
<div class="t" style="left:176.90px;top:421.99px;font-size:11px;line-height:14px;color:#000;letter-spacing:-0.469px;">BC Momentum</div>
<div class="ed" style="left:37px;top:441px;width:99px;height:18px"></div>
<div class="t" style="left:73.10px;top:443.99px;font-size:11px;line-height:14px;color:#000;letter-spacing:-0.102px;">0.746</div>
<div class="ed" style="left:161px;top:441px;width:99px;height:18px"></div>
<div class="t" style="left:207.80px;top:443.99px;font-size:11px;line-height:14px;color:#000;">0</div>
<div id="lb"></div>
<div id="lbv"></div>
<div id="lbclip">
<div style="position:absolute;left:0;top:42px;width:227px;height:14px;background:#a6a6a6"></div>
<div class="t" style="left:1.20px;top:0.99px;font-size:11px;line-height:14px;color:#000;letter-spacing:-0.253px;">Contour Plot</div>
<div class="t" style="left:1.20px;top:14.92px;font-size:11px;line-height:14px;color:#000;letter-spacing:-0.051px;">Surface Plot</div>
<div class="t" style="left:1.20px;top:28.85px;font-size:11px;line-height:14px;color:#000;letter-spacing:-0.054px;">Internuclear Distances vs Time</div>
<div class="t" style="left:1.20px;top:42.78px;font-size:11px;line-height:14px;color:#000;letter-spacing:-0.211px;">Potential Energy vs Time</div>
<div class="t" style="left:1.20px;top:56.71px;font-size:11px;line-height:14px;color:#000;letter-spacing:-0.150px;">Kinetic Energy vs Time</div>
<div class="t" style="left:1.20px;top:70.64px;font-size:11px;line-height:14px;color:#000;letter-spacing:0.012px;">Internuclear Velocities vs Internuclear Distance</div>
<div class="t" style="left:1.20px;top:84.57px;font-size:11px;line-height:14px;color:#000;letter-spacing:-0.026px;">Internuclear Accelerations vs Internuclear Distance</div>
<div class="t" style="left:1.20px;top:98.50px;font-size:11px;line-height:14px;color:#000;letter-spacing:-0.103px;">Internuclear Momenta vs Internuclear Distance</div>
</div>
<div style="position:absolute;left:255px;top:488px;width:16px;height:112px;background:linear-gradient(90deg,#f3f3f3,#ececec)"></div>
<div style="position:absolute;left:27px;top:600px;width:244px;height:16px;background:#f0f0f0"></div>
<div class="thv" style="left:255px;top:506px;width:13px;height:46px"></div>
<div class="thh" style="left:45px;top:601px;width:171px;height:12px"></div>
<div style="position:absolute;left:259px;top:526px;width:7px;height:1px;background:#4e4e4e;box-shadow:0 1px 0 #fafafa,0 3px 0 #4e4e4e,0 4px 0 #fafafa,0 6px 0 #4e4e4e,0 7px 0 #fafafa"></div>
<div style="position:absolute;left:127px;top:604px;width:1px;height:7px;background:#4e4e4e;box-shadow:1px 0 0 #fafafa,3px 0 0 #4e4e4e,4px 0 0 #fafafa,6px 0 0 #4e4e4e,7px 0 0 #fafafa"></div>
<svg style="position:absolute;left:260px;top:495px" width="7" height="4" viewBox="0 0 7 4"><path d="M0 4 L7 4 L3.500 0 Z" fill="#3c3c3c"/></svg>
<svg style="position:absolute;left:260px;top:588px" width="7" height="4" viewBox="0 0 7 4"><path d="M0 0 L7 0 L3.500 4 Z" fill="#3c3c3c"/></svg>
<svg style="position:absolute;left:33px;top:604px" width="4" height="7" viewBox="0 0 4 7"><path d="M4 0 L4 7 L0 3.500 Z" fill="#3c3c3c"/></svg>
<svg style="position:absolute;left:244px;top:604px" width="4" height="7" viewBox="0 0 4 7"><path d="M0 0 L0 7 L4 3.500 Z" fill="#3c3c3c"/></svg>
</div>
</body></html>
